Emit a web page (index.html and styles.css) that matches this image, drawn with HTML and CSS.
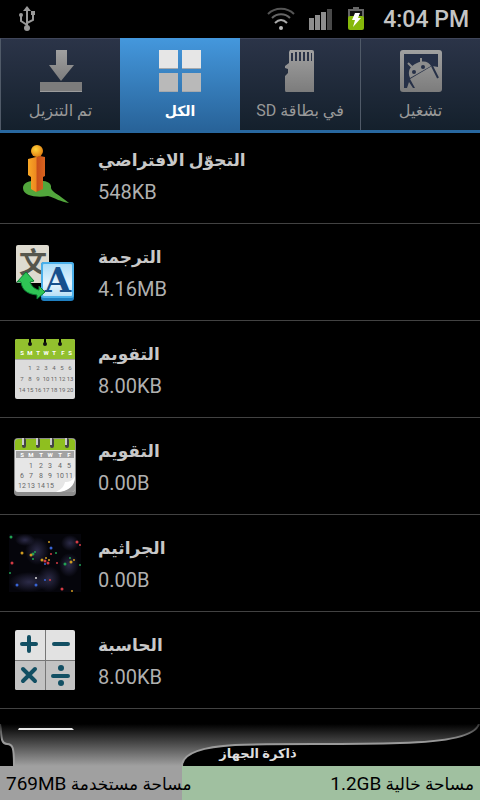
FILE: index.html
```html
<!DOCTYPE html>
<html lang="ar">
<head>
    <meta charset="UTF-8">
    <meta name="viewport" content="width=device-width, initial-scale=1.0">
    <title>إدارة التطبيقات</title>
    <link rel="stylesheet" href="styles.css">
</head>
<body>

    <header class="status-bar">
        <svg width="18" height="26" viewBox="0 0 18 26" fill="none" stroke="#999" stroke-width="2">
            <path d="M9 4v18M9 19L3 15V9M9 17l6-3V8"/>
            <path d="M9 0l4 5H5z" fill="#999" stroke="none"/>
            <circle cx="9" cy="22" r="3" fill="#999" stroke="none"/>
            <circle cx="3" cy="9" r="2" fill="#999" stroke="none"/>
            <path d="M13 5h4v4h-4z" fill="#999" stroke="none"/>
        </svg>
        <div class="status-icons">
            <svg width="28" height="24" viewBox="0 0 28 24" fill="none" stroke-width="2">
                <path d="M1 7C8 0 20 0 27 7" stroke="#555"/>
                <path d="M5 11C10 6 18 6 23 11" stroke="#666"/>
                <path d="M8 16C12 12 16 12 20 16" stroke="#aaa"/>
                <circle cx="14" cy="21" r="2" fill="#bbb"/>
            </svg>
            <svg width="24" height="24" viewBox="0 0 24 24">
                <path d="M0 11h5v12H0zM6 8h5v15H6zM12 5h5v18h-5z" fill="#8e8e8e"/>
                <path d="M18 2h5v21h-5z" fill="#4a4a4a"/>
            </svg>
            <svg width="18" height="24" viewBox="0 0 18 24">
                <path d="M6 0h6v2h5v10H1V2h5z" fill="#666"/>
                <path d="M3 4h12v5H3z" fill="#111"/>
                <rect x="1" y="9" width="16" height="14" rx="2" fill="#86b80a"/>
                <path d="M8 6h5l-2 5h3l-8 9 2-7H5z" fill="#fff"/>
            </svg>
            <span class="clock">4:04 PM</span>
        </div>
    </header>

    <nav class="tabs">
        <button class="tab" type="button">
            <svg width="44" height="44" viewBox="0 0 44 44">
                <defs>
                    <linearGradient id="metal" x1="0" y1="0" x2="0" y2="1">
                        <stop offset="0" stop-color="#a0a0a0"/>
                        <stop offset="1" stop-color="#7c7c7c"/>
                    </linearGradient>
                </defs>
                <path d="M17 1h11v15h7L22 32 10 16h7z" fill="url(#metal)"/>
                <path d="M1 33h42v10H1z" fill="#7c7c7c"/>
                <path d="M1 42h42v1H1z" fill="#9c9c9c"/>
            </svg>
            <span dir="rtl">تم التنزيل</span>
        </button>
        <button class="tab active" type="button">
            <svg width="44" height="44" viewBox="0 0 44 44">
                <path d="M1 1h19v19H1zM24 1h19v19H24z" fill="#e6e6e6"/>
                <path d="M1 24h19v19H1zM24 24h19v19H24z" fill="#b9b9b9"/>
                <path d="M1 19h19v1H1zM24 19h19v1H24zM1 42h19v1H1zM24 42h19v1H24z" fill="#a5a9ad"/>
            </svg>
            <span dir="rtl">الكل</span>
        </button>
        <button class="tab" type="button">
            <svg width="44" height="44" viewBox="0 0 44 44">
                <path d="M12 1h22q2 0 2 2v40H8q-1 0-1-2V27l3-3v-4l-3-1v-2l4-3V3z" fill="url(#metal)"/>
                <path d="M13 4h2v8h-2zM17 3h2v9h-2zM21 3h2v9h-2zM25 3h2v9h-2zM29 3h2v9h-2zM33 4h1v8h-1z" fill="#2a3347"/>
            </svg>
            <span dir="rtl">في بطاقة SD</span>
        </button>
        <button class="tab" type="button">
            <svg width="44" height="44" viewBox="0 0 44 44">
                <rect x="1" y="1" width="42" height="42" rx="3" fill="url(#metal)"/>
                <path d="M5 5h34v13l-6-1L11 30l5 9h-2l-4-6-2 6H5z" fill="#263047"/>
                <path d="M33 17l6 12" stroke="#263047" stroke-width="2"/>
                <path d="M11 29C8 22 11 17 18 14 25 11 30 13 32 17z" fill="#8d8d8d"/>
                <path d="M13 18l-4-4M22 13V9" stroke="#8d8d8d" stroke-width="2"/>
                <circle cx="15" cy="23" r="2" fill="#263047"/>
                <circle cx="24" cy="18" r="2" fill="#263047"/>
            </svg>
            <span dir="rtl">تشغيل</span>
        </button>
    </nav>

    <main class="app-list">
        <ul>
            <li>
                <svg class="app-icon" viewBox="0 0 72 72">
                    <defs>
                        <linearGradient id="man" x1="0" y1="0" x2="1" y2="0">
                            <stop offset="0" stop-color="#f9a826"/>
                            <stop offset=".45" stop-color="#ee8a20"/>
                            <stop offset=".55" stop-color="#c9501a"/>
                            <stop offset="1" stop-color="#d9641e"/>
                        </linearGradient>
                        <radialGradient id="head" cx=".4" cy=".35" r=".7">
                            <stop offset="0" stop-color="#ffd43a"/>
                            <stop offset="1" stop-color="#e07a10"/>
                        </radialGradient>
                    </defs>
                    <path d="M14 49c0-6 8-8 15-7 8-1 14 2 13 7 1 4 7 6 18 15-8-1-14-5-21-7-11 2-25 0-25-8z" fill="#52a63c"/>
                    <path d="M19 20l12-3 5 1v19l-2 1v12l-7 3-5-3V38l-3-2z" fill="url(#man)"/>
                    <circle cx="28" cy="12" r="6" fill="url(#head)"/>
                </svg>
                <div class="app-info">
                    <h2 dir="rtl">التجوّل الافتراضي</h2>
                    <p>548KB</p>
                </div>
            </li>
            <li>
                <svg class="app-icon" viewBox="0 0 72 72">
                    <defs>
                        <linearGradient id="tile" x1="0" y1="0" x2="0" y2="1">
                            <stop offset="0" stop-color="#a9dcf8"/>
                            <stop offset=".6" stop-color="#e4f4fd"/>
                            <stop offset="1" stop-color="#b6def5"/>
                        </linearGradient>
                    </defs>
                    <rect x="7" y="9" width="33" height="38" rx="2" fill="#dedbd0"/>
                    <text class="glyph-cjk" x="24" y="37">文</text>
                    <rect x="32" y="26" width="33" height="39" rx="3" fill="#1f7fc0"/>
                    <rect x="33" y="27" width="31" height="34" rx="2" fill="url(#tile)" stroke="#4bb0ea" stroke-width="2"/>
                    <text class="glyph-latin" x="49" y="56">A</text>
                    <path d="M8 46l9-10 8 9-4 1c2 5 5 7 9 8v-4l6 6-8 7v-4c-10-1-15-5-16-13z" fill="#2fc455" stroke="#087f32"/>
                </svg>
                <div class="app-info">
                    <h2 dir="rtl">الترجمة</h2>
                    <p>4.16MB</p>
                </div>
            </li>
            <li>
                <svg class="app-icon" viewBox="0 0 72 72">
                    <rect x="6" y="6" width="60" height="60" rx="2" fill="#dcdcdc"/>
                    <path d="M8 6h56q2 0 2 2v19H6V8q0-2 2-2z" fill="#92c02e"/>
                    <path d="M6 26h60v1H6z" fill="#a9a9a9"/>
                    <path d="M21 5v6M36 5v6M51 5v6" stroke="#000" stroke-width="2"/>
                    <g fill="#111"><circle cx="21" cy="11" r="2"/><circle cx="36" cy="11" r="2"/><circle cx="51" cy="11" r="2"/></g>
                    <g class="cal-days">
                        <text x="13" y="22">S</text><text x="21" y="22">M</text><text x="29" y="22">T</text><text x="37" y="22">W</text><text x="45" y="22">T</text><text x="54" y="22">F</text><text x="61" y="22">S</text>
                    </g>
                    <g class="cal-nums">
                        <text x="21" y="37">1</text><text x="29" y="37">2</text><text x="37" y="37">3</text><text x="45" y="37">4</text><text x="53" y="37">5</text><text x="61" y="37">6</text>
                        <text x="13" y="48">7</text><text x="21" y="48">8</text><text x="29" y="48">9</text><text x="37" y="48">10</text><text x="45" y="48">11</text><text x="53" y="48">12</text><text x="61" y="48">13</text>
                        <text x="13" y="59">14</text><text x="21" y="59">15</text><text x="29" y="59">16</text><text x="37" y="59">17</text><text x="45" y="59">18</text><text x="53" y="59">19</text><text x="61" y="59">20</text>
                    </g>
                </svg>
                <div class="app-info">
                    <h2 dir="rtl">التقويم</h2>
                    <p>8.00KB</p>
                </div>
            </li>
            <li>
                <svg class="app-icon" viewBox="0 0 72 72">
                    <rect x="5" y="8" width="62" height="58" rx="4" fill="#8c8c8c"/>
                    <rect x="6" y="9" width="60" height="53" rx="3" fill="#e6e6e6"/>
                    <path d="M9 9h54q3 0 3 3v8H6v-8q0-3 3-3z" fill="#8fbf1f"/>
                    <path d="M7 21h58v7H7z" fill="#a2a2a2"/>
                    <path d="M66 47v12q0 3-3 3H50q16-3 16-15z" fill="#999"/>
                    <path d="M47 62c6-3 8-6 9-10 5 0 8-2 10-6 0 10-7 16-19 16z" fill="#fff"/>
                    <path d="M15 10v6M29 10v6M43 10v6M58 10v6" stroke="#444" stroke-width="4" stroke-linecap="round"/>
                    <path d="M14 8v7M28 8v7M42 8v7M57 8v7" stroke="#ccc" stroke-width="2"/>
                    <g class="cal-days">
                        <text x="13" y="27">S</text><text x="22" y="27">M</text><text x="32" y="27">T</text><text x="41" y="27">W</text><text x="51" y="27">T</text><text x="60" y="27">F</text>
                    </g>
                    <g class="cal-nums large">
                        <text x="22" y="38">1</text><text x="32" y="38">2</text><text x="41" y="38">3</text><text x="51" y="38">4</text><text x="60" y="38">5</text>
                        <text x="13" y="48">6</text><text x="22" y="48">7</text><text x="32" y="48">8</text><text x="41" y="48">9</text><text x="51" y="48">10</text><text x="60" y="48">11</text>
                        <text x="13" y="58">12</text><text x="22" y="58">13</text><text x="32" y="58">14</text><text x="41" y="58">15</text>
                    </g>
                </svg>
                <div class="app-info">
                    <h2 dir="rtl">التقويم</h2>
                    <p>0.00B</p>
                </div>
            </li>
            <li>
                <svg class="app-icon" viewBox="0 0 72 72">
                    <defs>
                        <radialGradient id="haze">
                            <stop offset="0" stop-color="#2c2b48"/>
                            <stop offset="1" stop-color="#2c2b48" stop-opacity="0"/>
                        </radialGradient>
                    </defs>
                    <path d="M0 7h72v58H0z" fill="#05050b"/>
                    <g fill="url(#haze)">
                        <ellipse cx="16" cy="13" rx="10" ry="6"/>
                        <ellipse cx="28" cy="24" rx="12" ry="14"/>
                        <ellipse cx="20" cy="55" rx="20" ry="10"/>
                        <ellipse cx="40" cy="52" rx="12" ry="13"/>
                        <ellipse cx="60" cy="38" rx="10" ry="12"/>
                        <ellipse cx="61" cy="16" rx="9" ry="8"/>
                    </g>
                    <g fill="#d33b44"><circle cx="68" cy="15" r="1.5"/><circle cx="71" cy="18" r="1"/><circle cx="3" cy="36" r="1.5"/><circle cx="39" cy="36" r="1.5"/><circle cx="36" cy="34" r="1.5"/><circle cx="42" cy="27" r="1"/><circle cx="48" cy="36" r="1"/><circle cx="41" cy="53" r="1"/><circle cx="53" cy="62" r="1.5"/></g>
                    <g fill="#21a052"><circle cx="2" cy="10" r="1.5"/><circle cx="24" cy="27" r="1.5"/><circle cx="26" cy="25" r="1"/><circle cx="24" cy="32" r="1"/><circle cx="47" cy="26" r="1"/><circle cx="56" cy="37" r="1.5"/><circle cx="61" cy="31" r="1"/><circle cx="71" cy="38" r="1"/><circle cx="1" cy="46" r="1"/></g>
                    <g fill="#cf9a20"><circle cx="40" cy="15" r="1"/><circle cx="13" cy="26" r="1.5"/><circle cx="22" cy="28" r="1.5"/><circle cx="33" cy="33" r="1.5"/><circle cx="37" cy="31" r="1"/><circle cx="40" cy="33" r="1"/><circle cx="62" cy="35" r="1.5"/><circle cx="65" cy="33" r="1"/><circle cx="63" cy="64" r="1"/></g>
                    <g fill="#3763d4"><circle cx="42" cy="21" r="1.5"/><circle cx="36" cy="37" r="1"/><circle cx="36" cy="53" r="1"/><circle cx="8" cy="58" r="1.5"/><circle cx="27" cy="58" r="1.5"/></g>
                    <g fill="#ddd"><circle cx="27" cy="51" r="1"/></g>
                </svg>
                <div class="app-info">
                    <h2 dir="rtl">الجراثيم</h2>
                    <p>0.00B</p>
                </div>
            </li>
            <li>
                <svg class="app-icon" viewBox="0 0 72 72">
                    <rect x="6" y="6" width="60" height="60" rx="2" fill="#e2e2e2"/>
                    <path d="M6 37h60v27q0 2-2 2H8q-2 0-2-2z" fill="#c3c3c3"/>
                    <path d="M36 6h1v60h-1zM6 36h60v1H6z" fill="#777"/>
                    <g stroke="#124f63" stroke-width="4" stroke-linecap="round">
                        <path d="M13 20h14M20 13v14M45 20h14M14 45l12 12M26 45L14 57M44 52h15"/>
                    </g>
                    <circle cx="52" cy="44" r="3" fill="#124f63"/>
                    <circle cx="52" cy="59" r="3" fill="#124f63"/>
                </svg>
                <div class="app-info">
                    <h2 dir="rtl">الحاسبة</h2>
                    <p>8.00KB</p>
                </div>
            </li>
            <li>
                <svg class="app-icon" viewBox="0 0 72 72">
                    <path d="M10 7h53l2 2v3H9V9z" fill="#e8e8e8"/>
                </svg>
            </li>
        </ul>
    </main>

    <footer class="storage">
        <div class="storage-top">
            <svg viewBox="0 0 480 42" preserveAspectRatio="none">
                <defs>
                    <linearGradient id="fade" x1="0" y1="0" x2="0" y2="42" gradientUnits="userSpaceOnUse">
                        <stop offset="0" stop-color="#000"/>
                        <stop offset="1" stop-color="#a0a0a0"/>
                    </linearGradient>
                    <linearGradient id="edge" x1="0" y1="0" x2="0" y2="42" gradientUnits="userSpaceOnUse">
                        <stop offset="0" stop-color="#333"/>
                        <stop offset=".4" stop-color="#999"/>
                        <stop offset="1" stop-color="#a0a0a0"/>
                    </linearGradient>
                </defs>
                <path d="M0 0C2 10 0 20 7 20C13 20 14 24 14 42H182C182 30 200 23 235 21C285 19 340 21 400 19C445 18 475 12 479 0z" fill="url(#fade)"/>
                <path d="M0 0C2 10 0 20 7 20C13 20 14 24 14 42M182 42C182 30 200 23 235 21C285 19 340 21 400 19C445 18 475 12 479 0" fill="none" stroke="url(#edge)" stroke-width="2"/>
            </svg>
            <h3 dir="rtl">ذاكرة الجهاز</h3>
        </div>
        <div class="storage-bar">
            <div class="used" style="width: 38%"></div>
            <span dir="rtl">مساحة مستخدمة <b>769MB</b></span>
            <span dir="rtl">مساحة خالية <b>1.2GB</b></span>
        </div>
    </footer>

</body>
</html>
```

FILE: styles.css
```css
* {
    box-sizing: border-box;
    margin: 0;
    padding: 0;
}
body {
    display: flex;
    flex-direction: column;
    height: 100vh;
    overflow: hidden;
    background: #000;
    color: #c8c8c8;
    font-family: Roboto, 'DejaVu Sans', sans-serif;
}
.status-bar {
    flex: none;
    display: flex;
    align-items: center;
    justify-content: space-between;
    height: 38px;
    padding: 0 11px 0 18px;
}
.status-icons {
    display: flex;
    align-items: center;
    gap: 14px;
}
.clock {
    margin-left: 4px;
    font-size: 23px;
    font-weight: 500;
    color: #c4c4c4;
}
.tabs {
    flex: none;
    display: grid;
    grid-template-columns: repeat(4, 1fr);
    height: 95px;
    border-bottom: 3px solid #2868a0;
}
.tab {
    display: flex;
    flex-direction: column;
    align-items: center;
    gap: 4px;
    padding-top: 10px;
    border: none;
    border-top: 1px solid #40465a;
    background: linear-gradient(#2b3448, #14202c);
    color: #999;
    font-family: inherit;
    font-size: 16px;
    line-height: 28px;
    cursor: pointer;
}
.tab:first-child,
.tab:last-child {
    border-left: 1px solid #505a68;
}
.tab.active {
    border-top-color: #4497dc;
    background: linear-gradient(#4497dc, #286399);
    color: #fff;
    font-size: 14px;
    font-weight: bold;
}
.app-list {
    flex: 1;
    min-height: 0;
    overflow: hidden;
    position: relative;
    z-index: 1;
}
.app-list ul {
    margin-top: -6px;
    list-style: none;
}
.app-list li {
    display: flex;
    align-items: center;
    gap: 17px;
    height: 97px;
    padding-left: 9px;
    border-bottom: 1px solid #424242;
}
.app-icon {
    flex: none;
    width: 72px;
    height: 72px;
}
.app-info {
    display: flex;
    flex-direction: column;
    align-items: flex-start;
    padding-top: 2px;
}
.app-info h2 {
    font-size: 17px;
    line-height: 32px;
}
.app-info p {
    font-size: 20px;
    line-height: 32px;
    color: #b0b0b0;
}
.glyph-cjk {
    fill: #55564d;
    font-family: 'Noto Sans CJK SC', sans-serif;
    font-size: 28px;
    font-weight: bold;
    text-anchor: middle;
}
.glyph-latin {
    fill: #17508c;
    font-family: 'DejaVu Serif', serif;
    font-size: 34px;
    font-weight: bold;
    text-anchor: middle;
}
.cal-days,
.cal-nums {
    font-size: 6px;
    text-anchor: middle;
}
.cal-days {
    fill: #fff;
    font-weight: bold;
}
.cal-nums {
    fill: #666;
}
.cal-nums.large {
    font-size: 7px;
}
.storage {
    flex: none;
    margin-top: -6px;
}
.storage-top {
    position: relative;
    height: 42px;
}
.storage-top svg {
    display: block;
    width: 100%;
    height: 100%;
}
.storage-top h3 {
    position: absolute;
    bottom: 0;
    left: 36px;
    right: 0;
    font-size: 13px;
    line-height: 24px;
    text-align: center;
    color: #ddd;
}
.storage-bar {
    position: relative;
    display: flex;
    align-items: center;
    justify-content: space-between;
    height: 34px;
    padding: 0 6px;
    background: #a0c0a0;
    color: #000;
    font-size: 17px;
}
.storage-bar .used {
    position: absolute;
    top: 0;
    bottom: 0;
    left: 0;
    background: #a0a0a0;
}
.storage-bar span {
    position: relative;
}
.storage-bar b {
    font-size: 19px;
    font-weight: normal;
}
```
